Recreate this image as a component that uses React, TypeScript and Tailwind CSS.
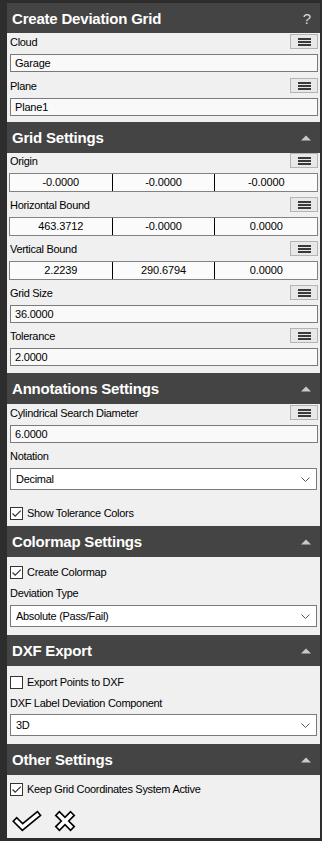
import React from 'react';

const FONT = "font-['Liberation_Sans',Arial,sans-serif]";

const Triangle = () => (
  <svg width="10" height="6" viewBox="0 0 10 6">
    <path d="M0 5.5 L5 0.5 L10 5.5 Z" fill="#c9c9c9" />
  </svg>
);

const Header: React.FC<{ title: string; first?: boolean }> = ({ title, first }) => (
  <div
    className={`${first ? 'h-[30px]' : 'h-[31px]'} bg-[#444444] flex items-center justify-between pl-[5px] pr-[9px]`}
  >
    <span className="text-white font-bold text-[15px] tracking-[-0.2px] leading-none">{title}</span>
    {first ? (
      <span className="text-[#d8d8d8] text-[15px] leading-none">?</span>
    ) : (
      <Triangle />
    )}
  </div>
);

const MenuButton = () => (
  <div className="w-[28px] h-[15px] bg-[#e8e8e8] border border-[#b4b4b4] flex flex-col items-center justify-center gap-[1px]">
    <span className="block w-[13px] h-[2px] bg-[#3a3a3a]" />
    <span className="block w-[13px] h-[2px] bg-[#3a3a3a]" />
    <span className="block w-[13px] h-[2px] bg-[#3a3a3a]" />
  </div>
);

const Label: React.FC<{ text: string; button?: boolean }> = ({ text, button }) => (
  <div className="h-[15px] flex items-end justify-between">
    <span className="text-[11px] tracking-[-0.3px] leading-[13px] text-black">{text}</span>
    {button && <MenuButton />}
  </div>
);

const TextBox: React.FC<{ value: string }> = ({ value }) => (
  <div className="h-[18px] bg-[#f9f9f9] border border-[#7a7a7a] flex items-center pl-[4px] text-[11px] tracking-[-0.2px] text-black">
    {value}
  </div>
);

const Triple: React.FC<{ values: string[] }> = ({ values }) => (
  <div className="h-[19px] ml-[-1px] bg-[#fbfbfb] border border-[#828282] flex text-[11px] tracking-[-0.1px] text-black">
    {values.map((v, i) => (
      <div
        key={i}
        className={`flex-1 flex items-center justify-center ${i > 0 ? 'border-l border-black' : ''}`}
      >
        {v}
      </div>
    ))}
  </div>
);

const Select: React.FC<{ value: string }> = ({ value }) => (
  <div className="h-[22px] mr-[1px] bg-white border border-[#7a7a7a] flex items-center justify-between pl-[5px] pr-[6px] text-[11px] tracking-[-0.3px] text-black">
    <span>{value}</span>
    <svg width="9" height="5" viewBox="0 0 9 5">
      <path d="M0.5 0.5 L4.5 4.5 L8.5 0.5" fill="none" stroke="#555" strokeWidth="1" />
    </svg>
  </div>
);

const Check: React.FC<{ text: string; checked?: boolean }> = ({ text, checked }) => (
  <div className="h-[15px] flex items-center gap-[4px]">
    <div className="w-[13px] h-[13px] bg-white border border-[#333333] flex items-center justify-center">
      {checked && (
        <svg width="11" height="11" viewBox="0 0 11 11">
          <path d="M1.5 5.5 L4.2 8.2 L9.8 2.6" fill="none" stroke="#333" strokeWidth="1.2" />
        </svg>
      )}
    </div>
    <span className="text-[11px] tracking-[-0.3px] leading-none text-black">{text}</span>
  </div>
);

const Field: React.FC<{ label: string; children: React.ReactNode; className?: string }> = ({
  label,
  children,
  className = '',
}) => (
  <div className={`flex flex-col gap-[5px] ${className}`}>
    <Label text={label} button />
    {children}
  </div>
);

export default function App() {
  return (
    <div className={`w-[322px] h-[841px] bg-[#2d2d2d] pt-[3px] pl-[7px] pr-[2px] ${FONT}`}>
      <div className="h-[835px] bg-[#f0f0f0] flex flex-col">
        {/* Create Deviation Grid */}
        <Header title="Create Deviation Grid" first />
        <div className="pl-[3px] pr-[2px] pt-[1px] pb-[6px] flex flex-col">
          <Field label="Cloud">
            <TextBox value="Garage" />
          </Field>
          <Field label="Plane" className="mt-[6px]">
            <TextBox value="Plane1" />
          </Field>
        </div>

        {/* Grid Settings */}
        <Header title="Grid Settings" />
        <div className="pl-[3px] pr-[2px] pt-0 pb-[7px] flex flex-col gap-[5px]">
          <Field label="Origin">
            <Triple values={['-0.0000', '-0.0000', '-0.0000']} />
          </Field>
          <Field label="Horizontal Bound">
            <Triple values={['463.3712', '-0.0000', '0.0000']} />
          </Field>
          <Field label="Vertical Bound">
            <Triple values={['2.2239', '290.6794', '0.0000']} />
          </Field>
          <Field label="Grid Size">
            <TextBox value="36.0000" />
          </Field>
          <Field label="Tolerance">
            <TextBox value="2.0000" />
          </Field>
        </div>

        {/* Annotations Settings */}
        <Header title="Annotations Settings" />
        <div className="pl-[3px] pr-[2px] pt-[1px] pb-[5px] flex flex-col">
          <Field label="Cylindrical Search Diameter">
            <TextBox value="6.0000" />
          </Field>
          <div className="mt-[5px] flex flex-col gap-[5px]">
            <Label text="Notation" />
            <Select value="Decimal" />
          </div>
          <div className="mt-[16px]">
            <Check text="Show Tolerance Colors" checked />
          </div>
        </div>

        {/* Colormap Settings */}
        <Header title="Colormap Settings" />
        <div className="pl-[3px] pr-[2px] pt-[8px] pb-[8px] flex flex-col">
          <Check text="Create Colormap" checked />
          <div className="mt-[5px] flex flex-col gap-[5px]">
            <Label text="Deviation Type" />
            <Select value="Absolute (Pass/Fail)" />
          </div>
        </div>

        {/* DXF Export */}
        <Header title="DXF Export" />
        <div className="pl-[3px] pr-[2px] pt-[9px] pb-[8px] flex flex-col">
          <Check text="Export Points to DXF" />
          <div className="mt-[5px] flex flex-col gap-[4px]">
            <Label text="DXF Label Deviation Component" />
            <Select value="3D" />
          </div>
        </div>

        {/* Other Settings */}
        <Header title="Other Settings" />
        <div className="pl-[3px] pr-[2px] pt-[7px] flex flex-col">
          <Check text="Keep Grid Coordinates System Active" checked />
          <div className="mt-[13px] flex items-center gap-[12px] pl-[2px]">
            <svg width="30" height="22" viewBox="0 0 30 22">
              <polygon
                points="4.77,7.73 10.67,13.63 25.42,1.56 28.58,5.44 10.33,20.37 1.23,11.27"
                fill="white"
                stroke="black"
                strokeWidth="1.6"
                strokeLinejoin="miter"
              />
            </svg>
            <svg width="22" height="22" viewBox="0 0 22 22">
              <polygon
                points="16.59,1.74 20.26,5.41 14.68,11 20.26,16.59 16.59,20.26 11,14.68 5.41,20.26 1.74,16.59 7.32,11 1.74,5.41 5.41,1.74 11,7.32"
                fill="white"
                stroke="black"
                strokeWidth="1.6"
                strokeLinejoin="miter"
              />
            </svg>
          </div>
        </div>
      </div>
    </div>
  );
}
